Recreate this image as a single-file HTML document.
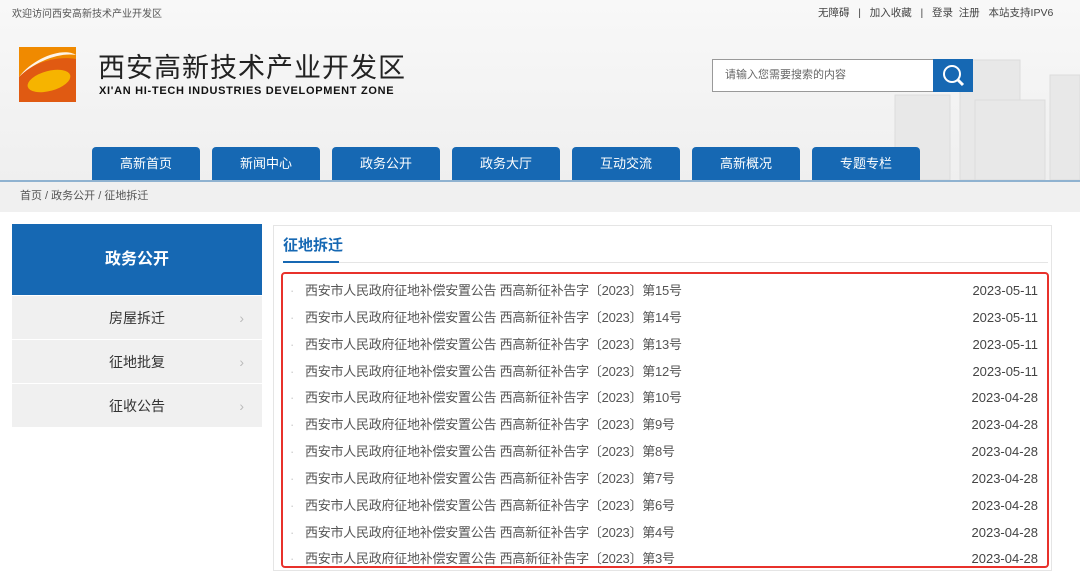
<!DOCTYPE html>
<html><head><meta charset="utf-8"><style>
*{margin:0;padding:0;box-sizing:border-box}
body{width:1080px;height:571px;overflow:hidden;background:#fff;font-family:"Liberation Sans","Noto Sans CJK SC",sans-serif;position:relative}
.hdr{position:absolute;left:0;top:0;width:1080px;height:180px;background:linear-gradient(#f8f8f8,#efefef)}
.a{position:absolute;white-space:nowrap}
.tab{position:absolute;top:147px;width:108px;height:33px;background:#1668b3;border-radius:4px 4px 0 0;color:#fff;font-size:13px;text-align:center;line-height:33px}
.side{position:absolute;left:12px;width:250px;height:44px;background:#f0f0f0;font-size:14px;color:#333;text-align:center;line-height:44px;border-bottom:1px solid #fff}
.side span{position:absolute;right:18px;color:#bbb;font-size:14px}
.row{position:absolute;left:290px;width:750px;height:27px;font-size:13px;color:#555;line-height:27px}
.row i{position:absolute;left:0;color:#ccc;font-style:normal}
.row b{font-weight:normal;position:absolute;left:15px;letter-spacing:-.25px}
.row em{font-style:normal;position:absolute;right:2px;color:#444}
</style></head><body>
<div class="hdr"></div>
<svg class="a" style="left:880px;top:40px" width="200" height="140"><g fill="#e8e8e8" stroke="#dcdcdc"><rect x="15" y="55" width="55" height="85"/><rect x="80" y="20" width="60" height="120"/><rect x="95" y="60" width="70" height="80"/><rect x="170" y="35" width="30" height="105"/></g></svg>
<div class="a" style="left:12px;top:5px;font-size:10px;color:#555">欢迎访问西安高新技术产业开发区</div>
<div class="a" style="left:818px;top:5px;font-size:10.5px;color:#444">无障碍 &nbsp; | &nbsp; 加入收藏 &nbsp; | &nbsp; 登录 &nbsp;注册 &nbsp; 本站支持IPV6</div>
<svg class="a" style="left:19px;top:47px" width="57" height="55"><rect width="57" height="55" fill="#f08a00"/><path d="M0 55V30C10 18 35 8 57 12V55Z" fill="#e05a12"/><path d="M0 30C15 10 45 0 57 8 40 5 15 15 0 30Z" fill="#fff" opacity=".9"/><ellipse cx="30" cy="34" rx="22" ry="10" fill="#f6b400" transform="rotate(-15 30 34)"/></svg>
<div class="a" style="left:98px;top:54px;font-size:27px;line-height:28px;color:#222;letter-spacing:1px">西安高新技术产业开发区</div>
<div class="a" style="left:99px;top:85px;font-size:11px;line-height:13px;font-weight:bold;color:#111;letter-spacing:.7px">XI'AN HI-TECH INDUSTRIES DEVELOPMENT ZONE</div>
<div class="a" style="left:712px;top:59px;width:222px;height:33px;border:1px solid #999;background:#fff;font-size:11px;color:#666;line-height:31px;padding-left:12px">请输入您需要搜索的内容</div>
<div class="a" style="left:933px;top:59px;width:40px;height:33px;background:#1668b3"><svg width="40" height="33"><circle cx="19" cy="15" r="8" fill="none" stroke="#fff" stroke-width="2"/><path d="M25 21l5 5" stroke="#fff" stroke-width="3"/></svg></div>
<div class="tab" style="left:92px">高新首页</div><div class="tab" style="left:212px">新闻中心</div><div class="tab" style="left:332px">政务公开</div><div class="tab" style="left:452px">政务大厅</div><div class="tab" style="left:572px">互动交流</div><div class="tab" style="left:692px">高新概况</div><div class="tab" style="left:812px">专题专栏</div>
<div class="a" style="left:0;top:180px;width:1080px;height:2px;background:#8fb2d0"></div>
<div class="a" style="left:0;top:182px;width:1080px;height:30px;background:#f0f0f0;font-size:11px;color:#555;line-height:28px;padding-left:20px">首页 / 政务公开 / 征地拆迁</div>
<div class="a" style="left:12px;top:224px;width:250px;height:71px;background:#1668b3;color:#fff;font-weight:bold;font-size:16px;text-align:center;line-height:72px">政务公开</div>
<div class="side" style="top:296px">房屋拆迁<span>›</span></div>
<div class="side" style="top:340px">征地批复<span>›</span></div>
<div class="side" style="top:384px">征收公告<span>›</span></div>
<div class="a" style="left:273px;top:225px;width:779px;height:346px;border:1px solid #e5e5e5"></div>
<div class="a" style="left:283px;top:234px;font-size:15px;color:#1668b3;font-weight:bold">征地拆迁</div>
<div class="a" style="left:283px;top:262px;width:765px;height:1px;background:#e5e5e5"></div>
<div class="a" style="left:283px;top:261px;width:56px;height:2px;background:#1668b3"></div>
<div class="a" style="left:281px;top:272px;width:768px;height:296px;border:2px solid #e8312b;border-radius:4px"></div>
<div class="row" style="top:277px"><i>·</i><b>西安市人民政府征地补偿安置公告 西高新征补告字〔2023〕第15号</b><em>2023-05-11</em></div>
<div class="row" style="top:304px"><i>·</i><b>西安市人民政府征地补偿安置公告 西高新征补告字〔2023〕第14号</b><em>2023-05-11</em></div>
<div class="row" style="top:331px"><i>·</i><b>西安市人民政府征地补偿安置公告 西高新征补告字〔2023〕第13号</b><em>2023-05-11</em></div>
<div class="row" style="top:358px"><i>·</i><b>西安市人民政府征地补偿安置公告 西高新征补告字〔2023〕第12号</b><em>2023-05-11</em></div>
<div class="row" style="top:384px"><i>·</i><b>西安市人民政府征地补偿安置公告 西高新征补告字〔2023〕第10号</b><em>2023-04-28</em></div>
<div class="row" style="top:411px"><i>·</i><b>西安市人民政府征地补偿安置公告 西高新征补告字〔2023〕第9号</b><em>2023-04-28</em></div>
<div class="row" style="top:438px"><i>·</i><b>西安市人民政府征地补偿安置公告 西高新征补告字〔2023〕第8号</b><em>2023-04-28</em></div>
<div class="row" style="top:465px"><i>·</i><b>西安市人民政府征地补偿安置公告 西高新征补告字〔2023〕第7号</b><em>2023-04-28</em></div>
<div class="row" style="top:492px"><i>·</i><b>西安市人民政府征地补偿安置公告 西高新征补告字〔2023〕第6号</b><em>2023-04-28</em></div>
<div class="row" style="top:519px"><i>·</i><b>西安市人民政府征地补偿安置公告 西高新征补告字〔2023〕第4号</b><em>2023-04-28</em></div>
<div class="row" style="top:545px"><i>·</i><b>西安市人民政府征地补偿安置公告 西高新征补告字〔2023〕第3号</b><em>2023-04-28</em></div>
</body></html>
